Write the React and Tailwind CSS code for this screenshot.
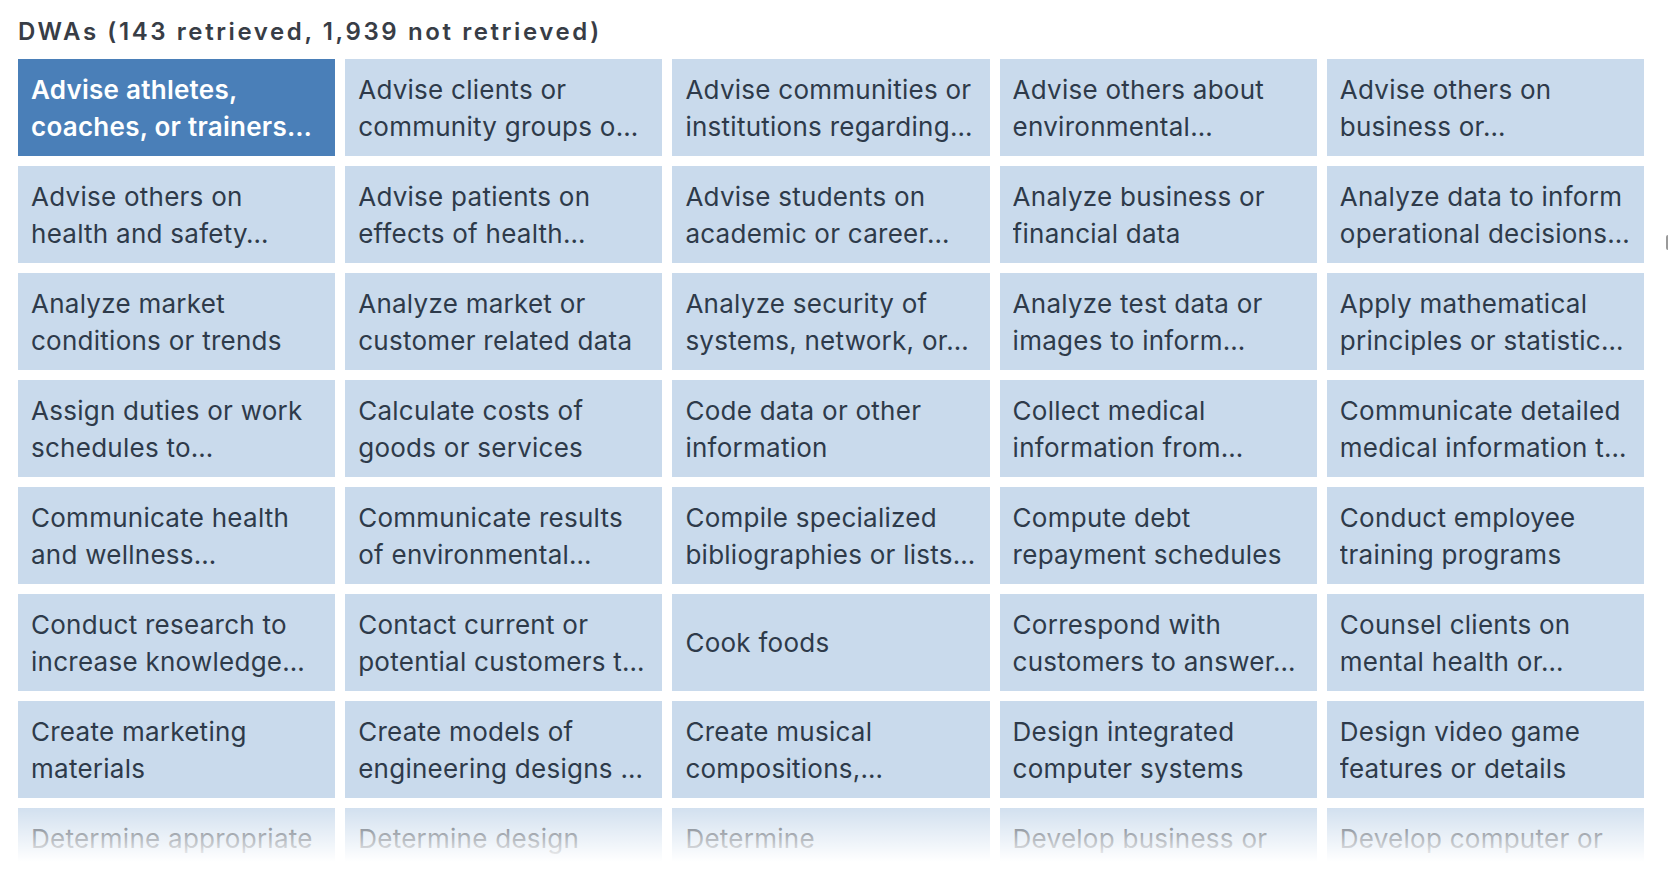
import React from "react";

const dwas = [
  ["Advise athletes,", "coaches, or trainers…"],
  ["Advise clients or", "community groups o…"],
  ["Advise communities or", "institutions regarding…"],
  ["Advise others about", "environmental…"],
  ["Advise others on", "business or…"],
  ["Advise others on", "health and safety…"],
  ["Advise patients on", "effects of health…"],
  ["Advise students on", "academic or career…"],
  ["Analyze business or", "financial data"],
  ["Analyze data to inform", "operational decisions…"],
  ["Analyze market", "conditions or trends"],
  ["Analyze market or", "customer related data"],
  ["Analyze security of", "systems, network, or…"],
  ["Analyze test data or", "images to inform…"],
  ["Apply mathematical", "principles or statistic…"],
  ["Assign duties or work", "schedules to…"],
  ["Calculate costs of", "goods or services"],
  ["Code data or other", "information"],
  ["Collect medical", "information from…"],
  ["Communicate detailed", "medical information t…"],
  ["Communicate health", "and wellness…"],
  ["Communicate results", "of environmental…"],
  ["Compile specialized", "bibliographies or lists…"],
  ["Compute debt", "repayment schedules"],
  ["Conduct employee", "training programs"],
  ["Conduct research to", "increase knowledge…"],
  ["Contact current or", "potential customers t…"],
  ["Cook foods"],
  ["Correspond with", "customers to answer…"],
  ["Counsel clients on", "mental health or…"],
  ["Create marketing", "materials"],
  ["Create models of", "engineering designs …"],
  ["Create musical", "compositions,…"],
  ["Design integrated", "computer systems"],
  ["Design video game", "features or details"],
  ["Determine appropriate", "methods or…"],
  ["Determine design", "criteria or…"],
  ["Determine", "operational…"],
  ["Develop business or", "market strategies"],
  ["Develop computer or", "online applications"],
];

const App = () => {
  return (
    <div
      className="relative h-[896px] overflow-hidden bg-white pl-[18px] pr-[24px] pt-[16px]"
      style={{ fontFamily: "Inter, 'Liberation Sans', sans-serif" }}
    >
      <h2 className="mb-[11px] text-[24px] font-semibold leading-[32px] tracking-[2.6px] text-[#383d46]">
        DWAs (143 retrieved, 1,939 not retrieved)
      </h2>

      <div className="grid grid-cols-5 gap-[10px]">
        {dwas.map((lines, i) => (
          <div
            key={i}
            className={`flex h-[97px] flex-col justify-center px-[13px] text-[26px] leading-[37px] tracking-[0.01em] ${
              i === 0
                ? "bg-[#4a7fb8] font-semibold text-white"
                : "bg-[#c9daec] text-[#2e3a4a]"
            }`}
          >
            {lines.map((line, j) => (
              <span key={j} className="block whitespace-nowrap overflow-hidden">
                {line}
              </span>
            ))}
          </div>
        ))}
      </div>

      {/* fade at the bottom of the list */}
      <div className="pointer-events-none absolute inset-x-0 top-[800px] h-[96px] bg-[linear-gradient(to_bottom,rgba(255,255,255,0.05)_0px,rgba(255,255,255,1)_62px)]" />

      {/* scrollbar sliver */}
      <div className="absolute right-0 top-[235px] h-[15px] w-[2px] rounded-l-sm bg-[#9a9a9a]" />
    </div>
  );
};

export default App;
